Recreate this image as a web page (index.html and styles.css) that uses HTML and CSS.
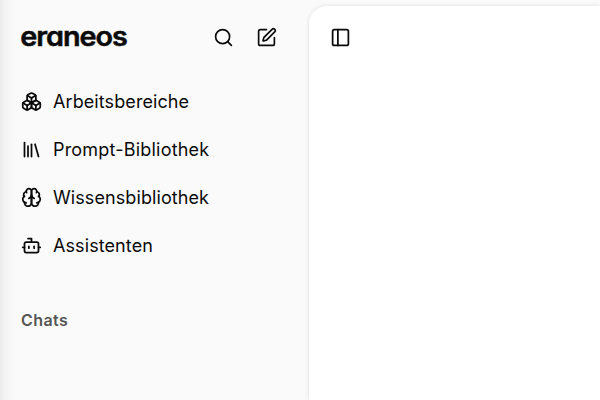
FILE: index.html
```html
<!DOCTYPE html>
<html lang="de">
<head>
<meta charset="utf-8">
<title>eraneos</title>
<link rel="stylesheet" href="styles.css">
</head>
<body>
<div class="app">
  <aside class="sidebar">
    <header class="top">
      <svg class="logo" viewBox="0 0 110 32"><text x="-0.7" y="24" textLength="106.4" lengthAdjust="spacingAndGlyphs">eraneos</text></svg>
      <div class="actions">
        <svg class="icon" viewBox="0 0 24 24"><circle cx="11" cy="11" r="8"/><path d="m21 21-4.3-4.3"/></svg>
        <svg class="icon" viewBox="0 0 24 24"><path d="M12 3H5a2 2 0 0 0-2 2v14a2 2 0 0 0 2 2h14a2 2 0 0 0 2-2v-7"/><path d="M18.375 2.625a1 1 0 0 1 3 3l-9.013 9.014a2 2 0 0 1-.853.505l-2.873.84a.5.5 0 0 1-.62-.62l.84-2.873a2 2 0 0 1 .506-.852z"/></svg>
      </div>
    </header>
    <nav class="nav">
      <a class="item"><svg class="icon" viewBox="0 0 24 24"><path d="M2.97 12.92A2 2 0 0 0 2 14.63v3.24a2 2 0 0 0 .97 1.71l3 1.8a2 2 0 0 0 2.06 0L12 19v-5.5l-5-3-4.03 2.42Z"/><path d="m7 16.5-4.74-2.85"/><path d="m7 16.5 5-3"/><path d="M7 16.5v5.17"/><path d="M12 13.5V19l3.97 2.38a2 2 0 0 0 2.06 0l3-1.8a2 2 0 0 0 .97-1.71v-3.24a2 2 0 0 0-.97-1.71L17 10.5l-5 3Z"/><path d="m17 16.5-5-3"/><path d="m17 16.5 4.74-2.85"/><path d="M17 16.5v5.17"/><path d="M7.97 4.42A2 2 0 0 0 7 6.13v4.37l5 3 5-3V6.13a2 2 0 0 0-.97-1.71l-3-1.8a2 2 0 0 0-2.06 0l-3 1.8Z"/><path d="M12 8 7.26 5.15"/><path d="m12 8 4.74-2.85"/><path d="M12 13.5V8"/></svg><span>Arbeitsbereiche</span></a>
      <a class="item wide"><svg class="icon" viewBox="0 0 24 24"><path d="m16 6 4 14"/><path d="M12 6v14"/><path d="M8 8v12"/><path d="M4 4v16"/></svg><span>Prompt-Bibliothek</span></a>
      <a class="item"><svg class="icon" viewBox="0 0 24 24"><path d="M12 5a3 3 0 1 0-5.997.125 4 4 0 0 0-2.526 5.77 4 4 0 0 0 .556 6.588A4 4 0 1 0 12 18Z"/><path d="M12 5a3 3 0 1 1 5.997.125 4 4 0 0 1 2.526 5.77 4 4 0 0 1-.556 6.588A4 4 0 1 1 12 18Z"/><path d="M15 13a4.5 4.5 0 0 1-3-4 4.5 4.5 0 0 1-3 4"/><path d="M17.599 6.5a3 3 0 0 0 .399-1.375"/><path d="M6.003 5.125A3 3 0 0 0 6.401 6.5"/><path d="M3.477 10.896a4 4 0 0 1 .585-.396"/><path d="M19.938 10.5a4 4 0 0 1 .585.396"/><path d="M6 18a4 4 0 0 1-1.967-.516"/><path d="M19.967 17.484A4 4 0 0 1 18 18"/></svg><span>Wissensbibliothek</span></a>
      <a class="item"><svg class="icon" viewBox="0 0 24 24"><path d="M12 8V4H8"/><rect width="16" height="12" x="4" y="8" rx="2"/><path d="M2 14h2"/><path d="M20 14h2"/><path d="M15 13v2"/><path d="M9 13v2"/></svg><span>Assistenten</span></a>
    </nav>
    <h2 class="section">Chats</h2>
  </aside>
  <main class="panel">
    <svg class="icon" viewBox="0 0 24 24"><rect width="18" height="18" x="3" y="3" rx="2"/><path d="M9 3v18"/></svg>
  </main>
</div>
</body>
</html>
```
FILE: styles.css
```css
* { box-sizing: border-box; }

body {
  margin: 0;
  font-family: Inter, "Liberation Sans", sans-serif;
  color: #0a0a0a;
}

.app {
  display: flex;
  width: 600px;
  height: 400px;
  overflow: hidden;
  background: linear-gradient(to right, #ebebeb 0, #f5f5f5 6px, #fafafa 18px);
}

.sidebar {
  width: 309px;
  padding: 21px 32px 0 21px;
}

.top {
  display: flex;
  align-items: center;
  justify-content: space-between;
  height: 33px;
}

.logo {
  width: 110px;
  height: 32px;
  overflow: visible;
}

.logo text {
  font-size: 27px;
  font-weight: 600;
  letter-spacing: -1px;
  font-feature-settings: "cv11";
  fill: #0a0a0a;
  stroke: #0a0a0a;
  stroke-width: 0.5px;
}

.actions {
  display: flex;
  gap: 22px;
}

.icon {
  display: block;
  flex: none;
  width: 21px;
  height: 21px;
  fill: none;
  stroke: #0a0a0a;
  stroke-width: 2;
  stroke-linecap: round;
  stroke-linejoin: round;
}

.actions .icon { stroke-width: 1.9; }

.nav {
  display: flex;
  flex-direction: column;
  margin-top: 23px;
}

.item {
  display: flex;
  align-items: center;
  gap: 11px;
  height: 48px;
  font-size: 18px;
  line-height: 27px;
  letter-spacing: 0.09px;
  white-space: nowrap;
}

.item.wide { letter-spacing: 0.2px; }

.section {
  margin: 39px 0 0;
  font-size: 16px;
  font-weight: 600;
  line-height: 24px;
  letter-spacing: 0.4px;
  color: #555;
}

.panel {
  flex: 1;
  margin-top: 6px;
  padding: 21px;
  background: #fff;
  border-top-left-radius: 18px;
  box-shadow: 0 0 4px rgba(0, 0, 0, 0.12);
}
```
